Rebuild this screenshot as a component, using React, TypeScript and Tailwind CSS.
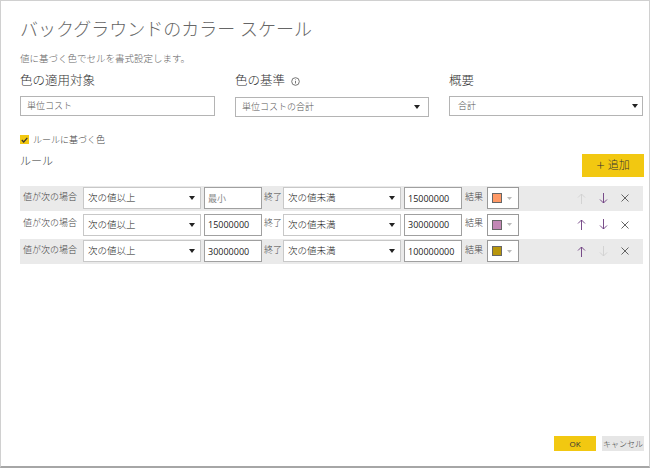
import React from "react";

const font = { fontFamily: '"Open Sans", "Noto Sans CJK JP", sans-serif' };

function Caret() {
  return (
    <svg width="6" height="4" viewBox="0 0 6 4" className="shrink-0">
      <path d="M0 0 H6 L3 4 Z" fill="#222" />
    </svg>
  );
}

function Select({ value, w }: { value: string; w: string }) {
  return (
    <div className={`${w} h-[22px] bg-white border border-[#c8c8c8] flex items-center justify-between pl-[4px] pr-[5px] text-[9.5px] text-[#222] font-light`}>
      <span>{value}</span>
      <Caret />
    </div>
  );
}

function Field({ value, w, muted }: { value: string; w: string; muted?: boolean }) {
  return (
    <div className={`${w} h-[22px] bg-white border border-[#a0a0a0] flex items-center px-[3px] text-[9px] font-normal ${muted ? "text-[#888] font-light" : "text-[#222]"}`}>
      {value}
    </div>
  );
}

function Arrow({ dir, on }: { dir: "up" | "down"; on: boolean }) {
  const c = on ? "#6b3a7e" : "#d0d0d0";
  return (
    <svg width="9" height="11" viewBox="0 0 9 11">
      {dir === "up" ? (
        <path d="M4.5 1 V11 M1 4.5 L4.5 1 L8 4.5" stroke={c} strokeWidth="0.9" fill="none" />
      ) : (
        <path d="M4.5 0 V10 M1 6.5 L4.5 10 L8 6.5" stroke={c} strokeWidth="0.9" fill="none" />
      )}
    </svg>
  );
}

function Close() {
  return (
    <svg width="8" height="8" viewBox="0 0 8 8">
      <path d="M0.5 0.5 L7.5 7.5 M7.5 0.5 L0.5 7.5" stroke="#555" strokeWidth="0.9" />
    </svg>
  );
}

const rules = [
  { from: "最小", muted: true, to: "15000000", color: "#ff9966", up: false, down: true, bg: "bg-[#eaeaea]" },
  { from: "15000000", muted: false, to: "30000000", color: "#c387b5", up: true, down: true, bg: "bg-white" },
  { from: "30000000", muted: false, to: "100000000", color: "#b8960c", up: true, down: false, bg: "bg-[#eaeaea]" },
];

export default function App() {
  return (
    <div style={font} className="w-[650px] h-[468px] bg-white border border-[#d0d0d0] border-b-2 border-b-[#a6a6a6] flex flex-col relative overflow-hidden">
      <div className="pl-[19px] pr-[6px] pt-[15px] flex flex-col">
        <h1 className="text-[18px] leading-[26px] text-[#666] font-light">バックグラウンドのカラー スケール</h1>
        <p className="mt-[10px] text-[9.5px] leading-[14px] text-[#666] font-light">値に基づく色でセルを書式設定します。</p>

        <div className="mt-[6px] flex gap-[20px]">
          <div className="w-[195px] flex flex-col">
            <div className="text-[12.5px] leading-[18px] text-[#333] font-light">色の適用対象</div>
            <div className="mt-[6px] h-[20px] border border-[#b4b4b4] flex items-center px-[6px] text-[9px] text-[#555] font-light">単位コスト</div>
          </div>
          <div className="w-[194px] flex flex-col">
            <div className="text-[12.5px] leading-[18px] text-[#333] font-light flex items-center gap-[6px]">
              色の基準
              <svg width="9" height="9" viewBox="0 0 9 9">
                <circle cx="4.5" cy="4.5" r="3.8" stroke="#666" strokeWidth="0.9" fill="none" />
                <path d="M4.5 4 V6.5 M4.5 2.5 V3.2" stroke="#666" strokeWidth="0.9" />
              </svg>
            </div>
            <div className="mt-[7px] h-[20px] border border-[#b4b4b4] flex items-center justify-between pl-[6px] pr-[8px] text-[9px] text-[#555] font-light">
              <span>単位コストの合計</span>
              <Caret />
            </div>
          </div>
          <div className="w-[194px] flex flex-col">
            <div className="text-[12.5px] leading-[18px] text-[#333] font-light">概要</div>
            <div className="mt-[6px] h-[20px] border border-[#b4b4b4] flex items-center justify-between pl-[8px] pr-[4px] text-[9px] text-[#555] font-light">
              <span>合計</span>
              <Caret />
            </div>
          </div>
        </div>

        <label className="mt-[16px] flex items-center gap-[4px] text-[9px] text-[#444] font-light">
          <span className="w-[9px] h-[9px] bg-[#f2c811] flex items-center justify-center">
            <svg width="7" height="6" viewBox="0 0 7 6">
              <path d="M0.8 3 L2.7 5 L6.3 0.8" stroke="#333" strokeWidth="1.2" fill="none" />
            </svg>
          </span>
          ルールに基づく色
        </label>

        <div className="mt-[6px] flex items-start justify-between w-[624px]">
          <div className="text-[11px] leading-[16px] text-[#333] font-light">ルール</div>
          <button className="mt-[1px] w-[62px] h-[23px] bg-[#f2c811] flex items-center justify-center gap-[3px] text-[11px] text-[#333] font-light">
            <span className="text-[15px] leading-none font-light">+</span>追加
          </button>
        </div>

        <div className="mt-[9px] w-[623px] flex flex-col gap-[1px]">
          {rules.map((r, i) => (
            <div key={i} className={`${r.bg} h-[25.5px] flex items-center text-[9px] text-[#444] font-light`}>
              <span className="w-[63px] pl-[3px] -mt-[4px]">値が次の場合</span>
              <Select value="次の値以上" w="w-[118px]" />
              <span className="w-[3px]" />
              <Field value={r.from} w="w-[58px]" muted={r.muted} />
              <span className="w-[21px] pl-[2px] -mt-[4px]">終了</span>
              <Select value="次の値未満" w="w-[118px]" />
              <span className="w-[3px]" />
              <Field value={r.to} w="w-[58px]" />
              <span className="w-[25px] pl-[3px] -mt-[4px]">結果</span>
              <div className="w-[32px] h-[22px] bg-white border border-[#999] flex items-center pl-[4px] gap-[5px]">
                <span className="w-[10px] h-[10px] border border-[#666]" style={{ background: r.color }} />
                <svg width="5" height="3" viewBox="0 0 5 3"><path d="M0 0 H5 L2.5 3 Z" fill="#bbb" /></svg>
              </div>
              <div className="ml-auto flex items-center gap-[13px] pr-[14px]">
                <Arrow dir="up" on={r.up} />
                <Arrow dir="down" on={r.down} />
                <Close />
              </div>
            </div>
          ))}
        </div>
      </div>

      <div className="mt-auto mb-[15px] pr-[5px] flex justify-end gap-[6px]">
        <button className="w-[42px] h-[15px] bg-[#f2c811] text-[8px] text-[#333] leading-none">OK</button>
        <button className="w-[42px] h-[15px] bg-[#e6e6e6] text-[8px] text-[#444] leading-none font-light">キャンセル</button>
      </div>
    </div>
  );
}
